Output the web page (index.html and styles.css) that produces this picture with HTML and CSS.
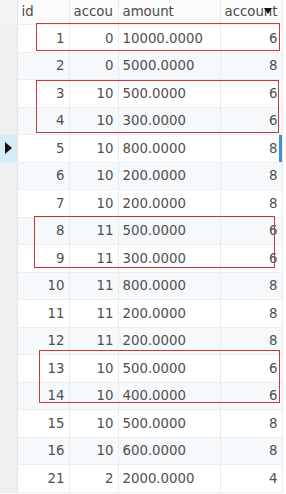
FILE: index.html
```html
<!DOCTYPE html>
<html>
<head>
<meta charset="utf-8">
<link rel="stylesheet" href="styles.css">
</head>
<body>
<div class="grid">
  <table class="tbl">
    <colgroup>
      <col class="c-gut"><col class="c-id"><col class="c-acc"><col class="c-amt"><col class="c-acct">
    </colgroup>
    <thead>
      <tr>
        <th class="gut"></th>
        <th>id</th>
        <th>accou</th>
        <th>amount</th>
        <th class="sorted">account<span class="sort"></span></th>
      </tr>
    </thead>
    <tbody>
      <tr><td class="gut"></td><td class="num">1</td><td class="num">0</td><td>10000.0000</td><td class="num">6</td></tr>
      <tr class="alt"><td class="gut"></td><td class="num">2</td><td class="num">0</td><td>5000.0000</td><td class="num">8</td></tr>
      <tr><td class="gut"></td><td class="num">3</td><td class="num">10</td><td>500.0000</td><td class="num">6</td></tr>
      <tr class="alt"><td class="gut"></td><td class="num">4</td><td class="num">10</td><td>300.0000</td><td class="num">6</td></tr>
      <tr class="cur"><td class="gut"><span class="ptr"></span></td><td class="num">5</td><td class="num">10</td><td>800.0000</td><td class="num">8</td></tr>
      <tr class="alt"><td class="gut"></td><td class="num">6</td><td class="num">10</td><td>200.0000</td><td class="num">8</td></tr>
      <tr><td class="gut"></td><td class="num">7</td><td class="num">10</td><td>200.0000</td><td class="num">8</td></tr>
      <tr class="alt"><td class="gut"></td><td class="num">8</td><td class="num">11</td><td>500.0000</td><td class="num">6</td></tr>
      <tr><td class="gut"></td><td class="num">9</td><td class="num">11</td><td>300.0000</td><td class="num">6</td></tr>
      <tr class="alt"><td class="gut"></td><td class="num">10</td><td class="num">11</td><td>800.0000</td><td class="num">8</td></tr>
      <tr><td class="gut"></td><td class="num">11</td><td class="num">11</td><td>200.0000</td><td class="num">8</td></tr>
      <tr class="alt"><td class="gut"></td><td class="num">12</td><td class="num">11</td><td>200.0000</td><td class="num">8</td></tr>
      <tr><td class="gut"></td><td class="num">13</td><td class="num">10</td><td>500.0000</td><td class="num">6</td></tr>
      <tr class="alt"><td class="gut"></td><td class="num">14</td><td class="num">10</td><td>400.0000</td><td class="num">6</td></tr>
      <tr><td class="gut"></td><td class="num">15</td><td class="num">10</td><td>500.0000</td><td class="num">8</td></tr>
      <tr class="alt"><td class="gut"></td><td class="num">16</td><td class="num">10</td><td>600.0000</td><td class="num">8</td></tr>
      <tr><td class="gut"></td><td class="num">21</td><td class="num">2</td><td>2000.0000</td><td class="num">4</td></tr>
    </tbody>
  </table>
  <div class="mark m1"></div>
  <div class="mark m2"></div>
  <div class="mark m3"></div>
  <div class="mark m4"></div>
</div>
</body>
</html>
```
FILE: styles.css
```css
html, body {
  margin: 0;
  padding: 0;
  background: #ffffff;
}
body {
  font-family: "DejaVu Sans", sans-serif;
  font-size: 13.3px;
  color: #4f4f4f;
}
.grid {
  position: relative;
  width: 286px;
  height: 494px;
  overflow: hidden;
}
.tbl {
  border-collapse: collapse;
  table-layout: fixed;
  width: 282px;
}
.c-gut { width: 17px; }
.c-id { width: 52px; }
.c-acc { width: 49px; }
.c-amt { width: 102px; }
.c-acct { width: 62px; }
th, td {
  padding: 0 4px;
  white-space: nowrap;
  overflow: hidden;
  border-right: 1px solid #ebebeb;
  border-bottom: 1px solid #ededed;
}
th {
  height: 22px;
  text-align: left;
  font-weight: normal;
  color: #4a4a4a;
  background: #fcfcfc;
  padding-top: 0;
  padding-bottom: 2px;
  text-overflow: clip;
}
td {
  height: 26.5px;
}
td.num { text-align: right; }
tr.alt td { background: #f6f9fc; }
.gut, tr.alt td.gut {
  background: #efefef;
  border-right: 1px solid #e2e2e2;
  padding: 0;
}
th.gut { background: #f4f4f4; }
tr.cur td.gut { background: #d5ecf8; }
.ptr {
  display: block;
  width: 0;
  height: 0;
  margin-left: 5px;
  border-top: 6px solid transparent;
  border-bottom: 6px solid transparent;
  border-left: 7px solid #111;
}
tr.cur td:last-child {
  box-shadow: inset -3px 0 0 #3d8fe0;
}
.sorted { position: relative; }
.sort {
  position: absolute;
  left: 43px;
  top: 8px;
  width: 0;
  height: 0;
  border-left: 4px solid transparent;
  border-right: 4px solid transparent;
  border-top: 6px solid #111;
}
.mark {
  position: absolute;
  border: 1.5px solid #c43a36;
}
.m1 { left: 36px; top: 23px; width: 242px; height: 26px; }
.m2 { left: 36px; top: 80px; width: 241px; height: 51px; }
.m3 { left: 34px; top: 216px; width: 239px; height: 50px; }
.m4 { left: 39px; top: 350px; width: 239px; height: 51px; }
```
